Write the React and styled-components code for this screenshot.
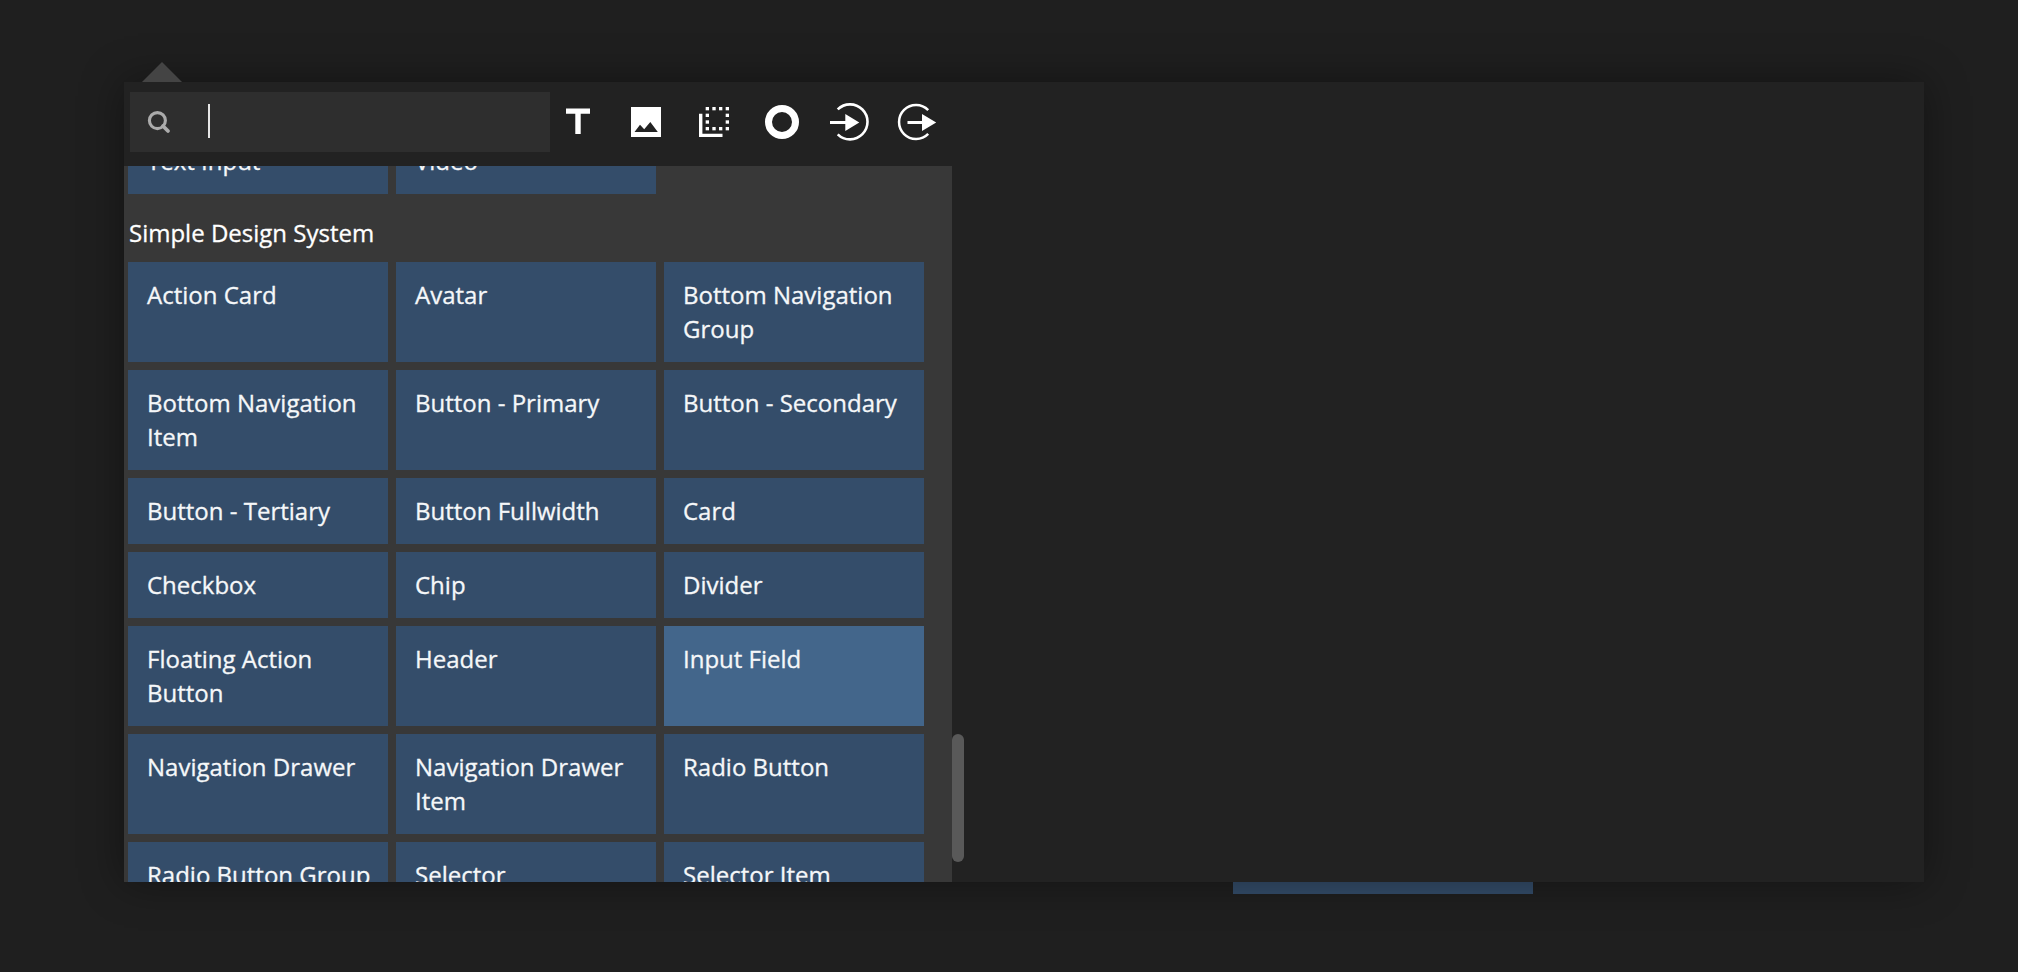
import React from "react";
import styled, { createGlobalStyle } from "styled-components";

const GlobalStyle = createGlobalStyle`
  *, *::before, *::after { box-sizing: border-box; }
  html, body { margin: 0; padding: 0; height: 100%; background: #1f1f1f; overflow: hidden; }
`;

const Stage = styled.div`
  position: relative;
  width: 2018px;
  height: 972px;
  padding: 82px 94px 90px 124px;
  overflow: hidden;
  background: #1f1f1f;
  color: #f5f7f9;
  font-family: "Open Sans", sans-serif;
  font-size: 24px;
  line-height: 34px;
  -webkit-text-stroke: 0.3px currentColor;
`;

const CanvasNode = styled.div`
  position: absolute;
  left: 1233px;
  top: 800px;
  width: 300px;
  height: 94px;
  background: #344d6a;
`;

const Popup = styled.div`
  position: relative;
  display: flex;
  flex-direction: column;
  width: 1800px;
  height: 800px;
  background: #222222;
  box-shadow: 0 0 40px rgba(0, 0, 0, 0.4);
`;

const Arrow = styled.div`
  position: absolute;
  left: 18px;
  bottom: 100%;
  border: 20px solid transparent;
  border-top-width: 0;
  border-bottom-color: #444444;
`;

const Toolbar = styled.div`
  display: flex;
  flex: none;
  align-items: flex-start;
  height: 84px;
  padding: 10px 0 0 6px;
`;

const SearchBox = styled.div`
  display: flex;
  align-items: center;
  width: 420px;
  height: 60px;
  padding-left: 16px;
  background: #2e2e2e;
`;

const Caret = styled.span`
  width: 2px;
  height: 34px;
  margin: 0 0 2px 36px;
  background: #e6e6e6;
`;

const Tools = styled.div`
  display: flex;
  height: 60px;
  align-items: center;
`;

const Tool = styled.button`
  display: flex;
  width: 68px;
  height: 60px;
  padding: 0;
  align-items: center;
  border: 0;
  background: none;
  color: #ffffff;
`;

const List = styled.div`
  position: relative;
  width: 828px;
  height: 716px;
  background: #383838;
`;

const Scroller = styled.div`
  height: 716px;
  overflow: hidden;
  padding-left: 4px;
`;

const Grid = styled.div`
  display: grid;
  grid-template-columns: repeat(3, 260px);
  gap: 8px;
  margin-top: ${(p) => p.$shift || 0}px;
`;

const Item = styled.div`
  min-height: 66px;
  padding: 16px 16px 16px 19px;
  background: ${(p) => (p.$active ? "#43668b" : "#344d6a")};
`;

const Heading = styled.div`
  height: 68px;
  padding: 22px 0 0 1px;
  color: #ffffff;
`;

const Thumb = styled.div`
  position: absolute;
  left: 100%;
  top: 568px;
  width: 12px;
  height: 128px;
  border-radius: 6px;
  background: #595959;
`;

const items = [
  "Action Card", "Avatar", "Bottom Navigation Group",
  "Bottom Navigation Item", "Button - Primary", "Button - Secondary",
  "Button - Tertiary", "Button Fullwidth", "Card",
  "Checkbox", "Chip", "Divider",
  "Floating Action Button", "Header", "Input Field",
  "Navigation Drawer", "Navigation Drawer Item", "Radio Button",
  "Radio Button Group", "Selector", "Selector Item",
];

// Grid cells (column, row) of the dotted square outline
const dots = [
  [0, 0], [1, 0], [2, 0], [3, 0],
  [0, 1], [3, 1],
  [0, 2], [3, 2],
  [0, 3], [1, 3], [2, 3], [3, 3],
];

const Icon = ({ children }) => (
  <svg width="60" height="60" viewBox="0 0 60 60" fill="currentColor">{children}</svg>
);

const icons = [
  <path key="text" d="M16 16.5H40V21.7H30.7V42H25.3V21.7H16Z" />,
  <path key="image" fillRule="evenodd" d="M13 15H43V45H13ZM16.5 40H39.8L32.3 30L26.2 37.2L22 32.7Z" />,
  <g key="group">
    {dots.map(([x, y]) => (
      <rect key={x + "-" + y} x={19.67 + x * 6.67} y={15 + y * 6.67} width="3.33" height="3.33" />
    ))}
    <path d="M13 21.7H16.4V41.7H36.5V45H13Z" />
  </g>,
  <circle key="circle" cx="28" cy="30" r="13.5" fill="none" stroke="currentColor" strokeWidth="7" />,
  <g key="in">
    <path d="M15.7 17.4A17.5 17.5 0 1 1 15.7 42.3" fill="none" stroke="currentColor" strokeWidth="2.6" />
    <path d="M8 29H23.3V22L37.3 30.5L23.3 39V32H8Z" />
  </g>,
  <g key="out">
    <path d="M38.2 18.1A17 17 0 1 0 38.2 41.9" fill="none" stroke="currentColor" strokeWidth="2.5" />
    <path d="M17.5 29H32V22L46.2 30.5L32 39V32H17.5Z" />
  </g>,
];

export default function App() {
  return (
    <>
      <GlobalStyle />
      <Stage>
        <CanvasNode />
        <Popup>
          <Arrow />
          <Toolbar>
            <SearchBox>
              <svg width="26" height="26" viewBox="0 0 26 26" fill="none" stroke="#ababab">
                <circle cx="11.4" cy="11.6" r="8" strokeWidth="3.1" />
                <path d="M17 17L22 22" strokeWidth="3.8" strokeLinecap="round" />
              </svg>
              <Caret />
            </SearchBox>
            <Tools>
              {icons.map((icon, i) => (
                <Tool key={i}>
                  <Icon>{icon}</Icon>
                </Tool>
              ))}
            </Tools>
          </Toolbar>
          <List>
            <Scroller>
              <Grid $shift={-38}>
                <Item>Text Input</Item>
                <Item>Video</Item>
              </Grid>
              <Heading>Simple Design System</Heading>
              <Grid>
                {items.map((name) => (
                  <Item key={name} $active={name === "Input Field"}>{name}</Item>
                ))}
              </Grid>
            </Scroller>
            <Thumb />
          </List>
        </Popup>
      </Stage>
    </>
  );
}
